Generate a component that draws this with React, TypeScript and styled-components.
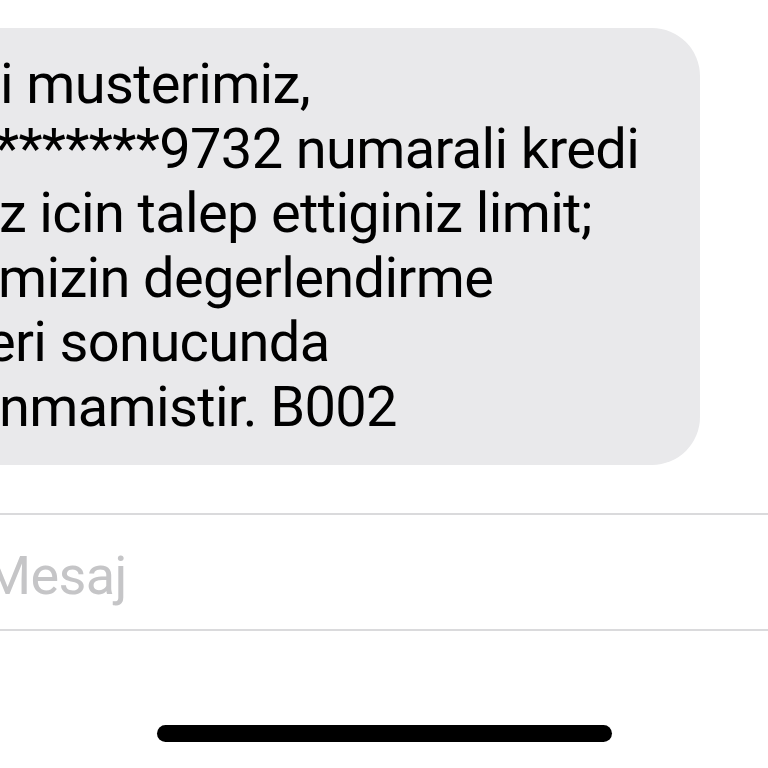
import styled, { createGlobalStyle } from "styled-components";

const GlobalStyle = createGlobalStyle`
  html, body {
    margin: 0;
    padding: 0;
    background: #ffffff;
    overflow: hidden;
  }
  body {
    font-family: Roboto, Inter, "Liberation Sans", sans-serif;
    -webkit-font-smoothing: antialiased;
  }
`;

const Screen = styled.div`
  width: 768px;
  height: 768px;
  display: flex;
  flex-direction: column;
  padding-top: 28px;
  box-sizing: border-box;
  overflow: hidden;
`;

const Bubble = styled.div`
  margin-left: -80px;
  width: 780px;
  height: 437px;
  box-sizing: border-box;
  padding: 24px 0 25px 80px;
  background-color: #e9e9eb;
  border-radius: 48px;
  display: flex;
  flex-direction: column;
`;

const Line = styled.div<{ $shift: number }>`
  margin-left: ${(p) => p.$shift}px;
  font-size: 56px;
  line-height: 64.6px;
  color: #000000;
  white-space: nowrap;
  letter-spacing: -0.65px;
`;

const InputBar = styled.div`
  margin-top: 48px;
  margin-left: -40px;
  width: 860px;
  height: 118px;
  box-sizing: border-box;
  border-top: 2px solid #dadadc;
  border-bottom: 2px solid #dadadc;
  display: flex;
  align-items: center;
`;

const Placeholder = styled.span`
  margin-left: 24px;
  padding-top: 6px;
  font-size: 54px;
  color: #c5c5c7;
  letter-spacing: -0.6px;
`;

const HomeIndicator = styled.div`
  margin: 94px auto 0;
  width: 455px;
  height: 17px;
  border-radius: 9px;
  background-color: #000000;
`;

const lines: { text: string; shift: number }[] = [
  { text: "i musterimiz,", shift: 0 },
  { text: "*********9732 numarali kredi", shift: -52 },
  { text: "z icin talep ettiginiz limit;", shift: -1 },
  { text: "mizin degerlendirme", shift: -2 },
  { text: "eri sonucunda", shift: -14 },
  { text: "nmamistir. B002", shift: -1 },
];

export default function App() {
  return (
    <>
      <GlobalStyle />
      <Screen>
        <Bubble>
          {lines.map((l) => (
            <Line key={l.text} $shift={l.shift}>
              {l.text}
            </Line>
          ))}
        </Bubble>
        <InputBar>
          <Placeholder>Mesaj</Placeholder>
        </InputBar>
        <HomeIndicator />
      </Screen>
    </>
  );
}
